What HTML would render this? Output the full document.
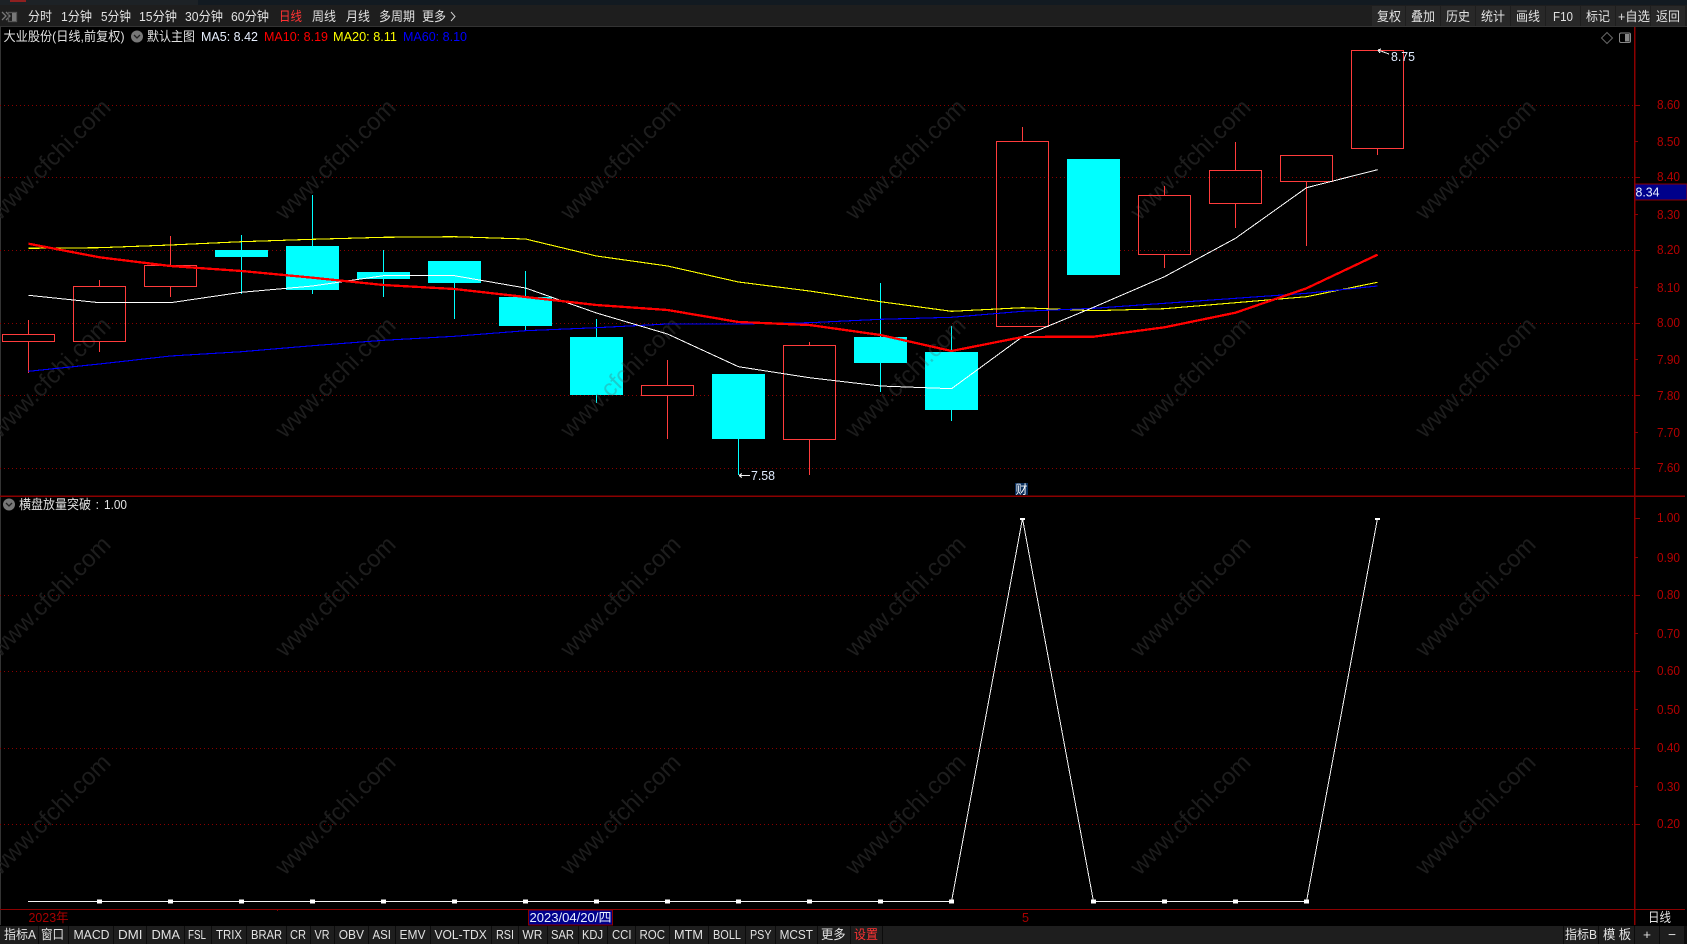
<!DOCTYPE html>
<html lang="zh"><head><meta charset="utf-8"><title>大业股份</title>
<style>
html,body{margin:0;padding:0;background:#000;width:1687px;height:944px;overflow:hidden}
svg{display:block;font-family:"Liberation Sans","Noto Sans CJK SC",sans-serif}
text{font-size:13px;fill:#e2e2e2}
.ax text,text.ax{fill:#b40000;font-size:13px}
.wm text{font-size:24px;fill:#1d1d1d;text-anchor:middle}
</style></head><body>
<svg width="1687" height="944" viewBox="0 0 1687 944" xmlns="http://www.w3.org/2000/svg">
<rect width="1687" height="944" fill="#000"/>
<rect x="0" y="27" width="1" height="898" fill="#333"/>
<!-- title strip + top toolbar -->
<rect x="0" y="0" width="198" height="5" fill="#1d2226"/>
<rect x="198" y="0" width="1489" height="5" fill="#121a21"/>
<rect x="10" y="0" width="16" height="2" fill="#8e2020"/>
<rect x="0" y="5" width="1687" height="21" fill="#1e1e1e"/>
<rect x="0" y="26" width="1687" height="1" fill="#333"/>
<g fill="#282828">
<rect x="1372" y="6" width="33" height="20"/><rect x="1406" y="6" width="34" height="20"/><rect x="1441" y="6" width="34" height="20"/><rect x="1476" y="6" width="34" height="20"/><rect x="1511" y="6" width="34" height="20"/><rect x="1546" y="6" width="34" height="20"/><rect x="1581" y="6" width="34" height="20"/><rect x="1616" y="6" width="34" height="20"/><rect x="1651" y="6" width="34" height="20"/>
</g>
<g fill="none" stroke="#777" stroke-width="1.3">
<path d="M2 12l4 4-4 4M6 12l4 4-4 4"/>
<rect x="8.5" y="12.5" width="8" height="9" stroke="#555"/>
</g>
<rect x="12" y="13" width="4" height="8" fill="#777"/>
<g>
<text x="28" y="21" textLength="24" lengthAdjust="spacingAndGlyphs">分时</text>
<text x="61" y="21" textLength="31" lengthAdjust="spacingAndGlyphs">1分钟</text>
<text x="101" y="21" textLength="30" lengthAdjust="spacingAndGlyphs">5分钟</text>
<text x="139" y="21" textLength="38" lengthAdjust="spacingAndGlyphs">15分钟</text>
<text x="185" y="21" textLength="38" lengthAdjust="spacingAndGlyphs">30分钟</text>
<text x="231" y="21" textLength="38" lengthAdjust="spacingAndGlyphs">60分钟</text>
<text x="279" y="21" textLength="23" lengthAdjust="spacingAndGlyphs" style="fill:#f33">日线</text>
<text x="312" y="21" textLength="24" lengthAdjust="spacingAndGlyphs">周线</text>
<text x="346" y="21" textLength="24" lengthAdjust="spacingAndGlyphs">月线</text>
<text x="379" y="21" textLength="36" lengthAdjust="spacingAndGlyphs">多周期</text>
<text x="422" y="21" textLength="24" lengthAdjust="spacingAndGlyphs">更多</text>
<path d="M451 12l4 4.500-4 4.500" fill="none" stroke="#ccc"/>
<text x="1377" y="21" textLength="24" lengthAdjust="spacingAndGlyphs">复权</text>
<text x="1411" y="21" textLength="24" lengthAdjust="spacingAndGlyphs">叠加</text>
<text x="1446" y="21" textLength="24" lengthAdjust="spacingAndGlyphs">历史</text>
<text x="1481" y="21" textLength="24" lengthAdjust="spacingAndGlyphs">统计</text>
<text x="1516" y="21" textLength="24" lengthAdjust="spacingAndGlyphs">画线</text>
<text x="1553" y="21" textLength="20" lengthAdjust="spacingAndGlyphs">F10</text>
<text x="1586" y="21" textLength="24" lengthAdjust="spacingAndGlyphs">标记</text>
<text x="1618" y="21" textLength="32" lengthAdjust="spacingAndGlyphs">+自选</text>
<text x="1656" y="21" textLength="24" lengthAdjust="spacingAndGlyphs">返回</text>
</g>
<!-- info line -->
<text x="3.500" y="41" textLength="121" lengthAdjust="spacingAndGlyphs">大业股份(日线,前复权)</text>
<circle cx="137" cy="36.500" r="6" fill="#777"/><path d="M134 35l3 3 3-3" fill="none" stroke="#222" stroke-width="1.300"/>
<text x="147" y="41" textLength="48" lengthAdjust="spacingAndGlyphs">默认主图</text>
<text x="201" y="41" textLength="57" lengthAdjust="spacingAndGlyphs" style="fill:#e8f0ff">MA5: 8.42</text>
<text x="264" y="41" textLength="64" lengthAdjust="spacingAndGlyphs" style="fill:#f00">MA10: 8.19</text>
<text x="333" y="41" textLength="64" lengthAdjust="spacingAndGlyphs" style="fill:#ff0">MA20: 8.11</text>
<text x="403" y="41" textLength="64" lengthAdjust="spacingAndGlyphs" style="fill:#00f">MA60: 8.10</text>
<path d="M1607 32.500l5.500 5.500-5.500 5.500-5.500-5.500z" fill="none" stroke="#666"/>
<rect x="1619.500" y="33" width="11" height="9.500" rx="1.500" fill="none" stroke="#888"/><rect x="1625" y="34" width="4.500" height="7.500" fill="#888"/>
<!-- grid -->
<g stroke="#8a0000" stroke-width="1" stroke-dasharray="1 3" fill="none" shape-rendering="crispEdges">
<path d="M0 105.500H1634M0 177.500H1634M0 250.500H1634M0 323.500H1634M0 395.500H1634M0 468.500H1634M0 595.500H1634M0 671.500H1634M0 748.500H1634M0 824.500H1634"/>
</g>
<!-- watermarks -->
<g class="wm">
<text transform="translate(56,165) rotate(-45)">www.cfchi.com</text><text transform="translate(341,165) rotate(-45)">www.cfchi.com</text><text transform="translate(626,165) rotate(-45)">www.cfchi.com</text><text transform="translate(911,165) rotate(-45)">www.cfchi.com</text><text transform="translate(1196,165) rotate(-45)">www.cfchi.com</text><text transform="translate(1481,165) rotate(-45)">www.cfchi.com</text>
<text transform="translate(56,383) rotate(-45)">www.cfchi.com</text><text transform="translate(341,383) rotate(-45)">www.cfchi.com</text><text transform="translate(1196,383) rotate(-45)">www.cfchi.com</text><text transform="translate(1481,383) rotate(-45)">www.cfchi.com</text>
<text transform="translate(56,602) rotate(-45)">www.cfchi.com</text><text transform="translate(341,602) rotate(-45)">www.cfchi.com</text><text transform="translate(626,602) rotate(-45)">www.cfchi.com</text><text transform="translate(911,602) rotate(-45)">www.cfchi.com</text><text transform="translate(1196,602) rotate(-45)">www.cfchi.com</text><text transform="translate(1481,602) rotate(-45)">www.cfchi.com</text>
<text transform="translate(56,820) rotate(-45)">www.cfchi.com</text><text transform="translate(341,820) rotate(-45)">www.cfchi.com</text><text transform="translate(626,820) rotate(-45)">www.cfchi.com</text><text transform="translate(911,820) rotate(-45)">www.cfchi.com</text><text transform="translate(1196,820) rotate(-45)">www.cfchi.com</text><text transform="translate(1481,820) rotate(-45)">www.cfchi.com</text>
</g>
<!-- candles -->
<g shape-rendering="crispEdges" fill="none" stroke="#ff3c3c" stroke-width="1">
<path d="M28.500 320V334M28.500 342V373"/><rect x="2.500" y="334.500" width="52" height="7"/>
<path d="M99.500 280V286M99.500 342V352"/><rect x="73.500" y="286.500" width="52" height="55"/>
<path d="M170.500 236V265M170.500 287V297"/><rect x="144.500" y="265.500" width="52" height="21"/>
<path d="M667.500 360V385M667.500 396V439"/><rect x="641.500" y="385.500" width="52" height="10"/>
<path d="M809.500 342V345M809.500 440V475"/><rect x="783.500" y="345.500" width="52" height="94"/>
<path d="M1022.500 127V141"/><rect x="996.500" y="141.500" width="52" height="185"/>
<path d="M1164.500 186V195M1164.500 255V268"/><rect x="1138.500" y="195.500" width="52" height="59"/>
<path d="M1235.500 142V170M1235.500 204V228"/><rect x="1209.500" y="170.500" width="52" height="33"/>
<path d="M1306.500 182V246"/><rect x="1280.500" y="155.500" width="52" height="26"/>
<path d="M1377.500 149V155"/><rect x="1351.500" y="50.500" width="52" height="98"/>
</g>
<g shape-rendering="crispEdges" stroke="#0ff" stroke-width="1" fill="none">
<path d="M241.500 235V294M312.500 195V294M383.500 250V297M454.500 283V319M525.500 271V330M596.500 319V403M738.500 439V475M880.500 283V392M951.500 326V421"/>
</g>
<g shape-rendering="crispEdges" fill="#0ff">
<rect x="215" y="250" width="53" height="7"/><rect x="286" y="246" width="53" height="44"/><rect x="357" y="272" width="53" height="7"/><rect x="428" y="261" width="53" height="22"/><rect x="499" y="297" width="53" height="29"/><rect x="570" y="337" width="53" height="58"/><rect x="712" y="374" width="53" height="65"/><rect x="854" y="337" width="53" height="26"/><rect x="925" y="352" width="53" height="58"/><rect x="1067" y="159" width="53" height="116"/>
</g>
<!-- faint watermarks over cyan bodies -->
<g class="wm">
<text transform="translate(626,383) rotate(-45)" style="fill:rgba(90,90,90,.3)">www.cfchi.com</text><text transform="translate(911,383) rotate(-45)" style="fill:rgba(90,90,90,.3)">www.cfchi.com</text>
</g>
<!-- moving averages -->
<g fill="none" shape-rendering="crispEdges" stroke-linejoin="round">
<polyline stroke="#ff0" stroke-width="1.100" points="28.500,248.300 99.500,247.700 170.500,245 241.500,241.700 312.500,239.300 383.500,237.300 454.500,236.700 525.500,239 596.500,256 667.500,266 738.500,282 809.500,291 880.500,301.700 951.500,311.300 1022.500,307.700 1093.500,310.700 1164.500,308.700 1235.500,302.700 1306.500,296.700 1377.500,282.300"/>
<polyline stroke="#00f" stroke-width="1.100" points="28.500,371.300 99.500,364 170.500,356 241.500,351.700 312.500,345.700 383.500,340.300 454.500,336.300 525.500,330.700 596.500,327.700 667.500,324 738.500,324 809.500,322.700 880.500,319.300 951.500,317.300 1022.500,311.300 1093.500,308.300 1164.500,303.300 1235.500,298.300 1306.500,293.300 1377.500,286"/>
<polyline stroke="#fff" stroke-width="1" points="28.500,295.300 99.500,302.700 170.500,302.700 241.500,292.300 312.500,286 383.500,275.700 454.500,275.700 525.500,288 596.500,313 667.500,334 738.500,366.700 809.500,377.700 880.500,386 951.500,388.700 1022.500,336.700 1093.500,307.300 1164.500,276.700 1235.500,238.300 1306.500,187.700 1377.500,169.700"/>
<polyline stroke="#f00" stroke-width="2.300" points="28.500,243.700 99.500,257.300 170.500,266 241.500,271 312.500,277.700 383.500,285 454.500,289 525.500,297 596.500,305 667.500,310 738.500,322 809.500,325 880.500,335 951.500,351 1022.500,337 1093.500,336.700 1164.500,327.300 1235.500,312.700 1306.500,288.300 1377.500,254.700"/>
</g>
<!-- hi/lo markers -->
<g fill="none" stroke="#eee" stroke-width="1" shape-rendering="crispEdges">
<path d="M1378 50L1389 54M1378 50l3-1M1378 50l2 3"/>
<path d="M739 475.500H750M739 475.500l3-2M739 475.500l3 2"/>
</g>
<text x="1391" y="61" textLength="24" lengthAdjust="spacingAndGlyphs" style="fill:#e0ecff">8.75</text>
<text x="751" y="480" textLength="24" lengthAdjust="spacingAndGlyphs" style="fill:#e0ecff">7.58</text>
<rect x="1015" y="483" width="13" height="12" fill="#0a2f5c"/>
<text x="1015.500" y="493.500" textLength="12" lengthAdjust="spacingAndGlyphs" style="font-size:12px;fill:#fff">财</text>
<!-- separators and axes -->
<g fill="#8b0000" shape-rendering="crispEdges">
<rect x="0" y="495.500" width="1685" height="1.500"/>
<rect x="0" y="909" width="1685" height="1"/>
<rect x="1634" y="27" width="1.500" height="898"/>
<rect x="277" y="909" width="1" height="2"/>
<rect x="1635" y="105" width="5" height="1"/><rect x="1635" y="141" width="3" height="1"/><rect x="1635" y="177" width="5" height="1"/><rect x="1635" y="214" width="3" height="1"/><rect x="1635" y="250" width="5" height="1"/><rect x="1635" y="287" width="3" height="1"/><rect x="1635" y="323" width="5" height="1"/><rect x="1635" y="359" width="3" height="1"/><rect x="1635" y="395" width="5" height="1"/><rect x="1635" y="432" width="3" height="1"/><rect x="1635" y="468" width="5" height="1"/>
<rect x="1635" y="518" width="5" height="1"/><rect x="1635" y="557" width="3" height="1"/><rect x="1635" y="595" width="5" height="1"/><rect x="1635" y="633" width="3" height="1"/><rect x="1635" y="671" width="5" height="1"/><rect x="1635" y="709" width="3" height="1"/><rect x="1635" y="748" width="5" height="1"/><rect x="1635" y="786" width="3" height="1"/><rect x="1635" y="824" width="5" height="1"/>
</g>
<g class="ax">
<text x="1657" y="109" textLength="23" lengthAdjust="spacingAndGlyphs">8.60</text>
<text x="1657" y="146" textLength="23" lengthAdjust="spacingAndGlyphs">8.50</text>
<text x="1657" y="181" textLength="23" lengthAdjust="spacingAndGlyphs">8.40</text>
<text x="1657" y="219" textLength="23" lengthAdjust="spacingAndGlyphs">8.30</text>
<text x="1657" y="254" textLength="23" lengthAdjust="spacingAndGlyphs">8.20</text>
<text x="1657" y="292" textLength="23" lengthAdjust="spacingAndGlyphs">8.10</text>
<text x="1657" y="327" textLength="23" lengthAdjust="spacingAndGlyphs">8.00</text>
<text x="1657" y="364" textLength="23" lengthAdjust="spacingAndGlyphs">7.90</text>
<text x="1657" y="400" textLength="23" lengthAdjust="spacingAndGlyphs">7.80</text>
<text x="1657" y="437" textLength="23" lengthAdjust="spacingAndGlyphs">7.70</text>
<text x="1657" y="472" textLength="23" lengthAdjust="spacingAndGlyphs">7.60</text>
<text x="1657" y="522" textLength="23" lengthAdjust="spacingAndGlyphs">1.00</text>
<text x="1657" y="562" textLength="23" lengthAdjust="spacingAndGlyphs">0.90</text>
<text x="1657" y="599" textLength="23" lengthAdjust="spacingAndGlyphs">0.80</text>
<text x="1657" y="638" textLength="23" lengthAdjust="spacingAndGlyphs">0.70</text>
<text x="1657" y="675" textLength="23" lengthAdjust="spacingAndGlyphs">0.60</text>
<text x="1657" y="714" textLength="23" lengthAdjust="spacingAndGlyphs">0.50</text>
<text x="1657" y="752" textLength="23" lengthAdjust="spacingAndGlyphs">0.40</text>
<text x="1657" y="791" textLength="23" lengthAdjust="spacingAndGlyphs">0.30</text>
<text x="1657" y="828" textLength="23" lengthAdjust="spacingAndGlyphs">0.20</text>
</g>
<rect x="1635" y="184" width="52" height="16" fill="#00008b" stroke="#8b0000" shape-rendering="crispEdges"/>
<text x="1635.500" y="196.500" textLength="24" lengthAdjust="spacingAndGlyphs" style="fill:#e8f0ff">8.34</text>
<!-- indicator panel -->
<circle cx="9" cy="504.500" r="6" fill="#777"/><path d="M6 503l3 3 3-3" fill="none" stroke="#222" stroke-width="1.300"/>
<text x="19" y="509" textLength="72" lengthAdjust="spacingAndGlyphs">横盘放量突破</text>
<text x="95.500" y="509">:</text>
<text x="104" y="509" textLength="23" lengthAdjust="spacingAndGlyphs">1.00</text>
<polyline fill="none" stroke="#f4f4f4" stroke-width="1" shape-rendering="crispEdges" points="28,901.500 951.500,901.500 1022.500,518.500 1093.500,901.500 1306.500,901.500 1377.500,518.500"/>
<g fill="#fff" shape-rendering="crispEdges">
<rect x="97" y="899.500" width="5" height="4"/><rect x="168" y="899.500" width="5" height="4"/><rect x="239" y="899.500" width="5" height="4"/><rect x="310" y="899.500" width="5" height="4"/><rect x="381" y="899.500" width="5" height="4"/><rect x="452" y="899.500" width="5" height="4"/><rect x="523" y="899.500" width="5" height="4"/><rect x="594" y="899.500" width="5" height="4"/><rect x="665" y="899.500" width="5" height="4"/><rect x="736" y="899.500" width="5" height="4"/><rect x="807" y="899.500" width="5" height="4"/><rect x="878" y="899.500" width="5" height="4"/><rect x="949" y="899.500" width="5" height="4"/><rect x="1091" y="899.500" width="5" height="4"/><rect x="1162" y="899.500" width="5" height="4"/><rect x="1233" y="899.500" width="5" height="4"/><rect x="1304" y="899.500" width="5" height="4"/>
<rect x="1020" y="518" width="5" height="2"/><rect x="1375" y="518" width="5" height="2"/>
</g>
<!-- time axis -->
<text x="28.500" y="922" textLength="40" lengthAdjust="spacingAndGlyphs" style="fill:#a80000">2023年</text>
<rect x="528.500" y="910" width="84" height="15" fill="#00008b" stroke="#8b0000" stroke-width="1" shape-rendering="crispEdges"/>
<text x="529.500" y="922" textLength="82" lengthAdjust="spacingAndGlyphs" style="fill:#e8f0ff">2023/04/20/四</text>
<text x="1022" y="922" textLength="7" lengthAdjust="spacingAndGlyphs" style="fill:#a80000">5</text>
<text x="1648" y="922" textLength="23" lengthAdjust="spacingAndGlyphs">日线</text>
<!-- bottom toolbar -->
<rect x="0" y="926" width="1687" height="18" fill="#1e1e1e"/>
<g fill="#0c0c0c" shape-rendering="crispEdges">
<rect x="38" y="926" width="1" height="18"/><rect x="68" y="926" width="1" height="18"/><rect x="113" y="926" width="1" height="18"/><rect x="146" y="926" width="1" height="18"/><rect x="184" y="926" width="1" height="18"/><rect x="211" y="926" width="1" height="18"/><rect x="246" y="926" width="1" height="18"/><rect x="286" y="926" width="1" height="18"/><rect x="310" y="926" width="1" height="18"/><rect x="334" y="926" width="1" height="18"/><rect x="368" y="926" width="1" height="18"/><rect x="395" y="926" width="1" height="18"/><rect x="430" y="926" width="1" height="18"/><rect x="491" y="926" width="1" height="18"/><rect x="518" y="926" width="1" height="18"/><rect x="547" y="926" width="1" height="18"/><rect x="578" y="926" width="1" height="18"/><rect x="607" y="926" width="1" height="18"/><rect x="635" y="926" width="1" height="18"/><rect x="669" y="926" width="1" height="18"/><rect x="708" y="926" width="1" height="18"/><rect x="745" y="926" width="1" height="18"/><rect x="775" y="926" width="1" height="18"/><rect x="817" y="926" width="1" height="18"/><rect x="850" y="926" width="1" height="18"/><rect x="882" y="926" width="1" height="18"/>
<rect x="1563" y="926" width="1" height="18"/><rect x="1598" y="926" width="1" height="18"/><rect x="1634" y="926" width="1" height="18"/><rect x="1659" y="926" width="1" height="18"/><rect x="1684" y="926" width="3" height="18"/>
</g>
<g>
<text x="4" y="939" textLength="32" lengthAdjust="spacingAndGlyphs">指标A</text>
<text x="41" y="939" textLength="23" lengthAdjust="spacingAndGlyphs">窗口</text>
<text x="73.500" y="939" textLength="36" lengthAdjust="spacingAndGlyphs">MACD</text>
<text x="118" y="939" textLength="24.500" lengthAdjust="spacingAndGlyphs">DMI</text>
<text x="151.500" y="939" textLength="28.500" lengthAdjust="spacingAndGlyphs">DMA</text>
<text x="188" y="939" textLength="18" lengthAdjust="spacingAndGlyphs">FSL</text>
<text x="216" y="939" textLength="26" lengthAdjust="spacingAndGlyphs">TRIX</text>
<text x="251" y="939" textLength="31" lengthAdjust="spacingAndGlyphs">BRAR</text>
<text x="290" y="939" textLength="16" lengthAdjust="spacingAndGlyphs">CR</text>
<text x="314.500" y="939" textLength="15" lengthAdjust="spacingAndGlyphs">VR</text>
<text x="338.700" y="939" textLength="25.300" lengthAdjust="spacingAndGlyphs">OBV</text>
<text x="372.500" y="939" textLength="18.500" lengthAdjust="spacingAndGlyphs">ASI</text>
<text x="399.500" y="939" textLength="26" lengthAdjust="spacingAndGlyphs">EMV</text>
<text x="434.500" y="939" textLength="52.300" lengthAdjust="spacingAndGlyphs">VOL-TDX</text>
<text x="496" y="939" textLength="18" lengthAdjust="spacingAndGlyphs">RSI</text>
<text x="522.400" y="939" textLength="20" lengthAdjust="spacingAndGlyphs">WR</text>
<text x="551" y="939" textLength="23" lengthAdjust="spacingAndGlyphs">SAR</text>
<text x="582" y="939" textLength="21" lengthAdjust="spacingAndGlyphs">KDJ</text>
<text x="612" y="939" textLength="19.500" lengthAdjust="spacingAndGlyphs">CCI</text>
<text x="639.500" y="939" textLength="25.500" lengthAdjust="spacingAndGlyphs">ROC</text>
<text x="674" y="939" textLength="29" lengthAdjust="spacingAndGlyphs">MTM</text>
<text x="713" y="939" textLength="28" lengthAdjust="spacingAndGlyphs">BOLL</text>
<text x="750" y="939" textLength="21.500" lengthAdjust="spacingAndGlyphs">PSY</text>
<text x="779.600" y="939" textLength="33.400" lengthAdjust="spacingAndGlyphs">MCST</text>
<text x="821" y="939" textLength="24.600" lengthAdjust="spacingAndGlyphs">更多</text>
<text x="854" y="939" textLength="24" lengthAdjust="spacingAndGlyphs" style="fill:#f33">设置</text>
<text x="1565" y="939" textLength="32" lengthAdjust="spacingAndGlyphs">指标B</text>
<text x="1603" y="939" textLength="28" lengthAdjust="spacingAndGlyphs">模 板</text>
<text x="1643" y="939" textLength="8" lengthAdjust="spacingAndGlyphs">+</text>
<text x="1668" y="939" textLength="8" lengthAdjust="spacingAndGlyphs">−</text>
</g>
</svg>
</body></html>
